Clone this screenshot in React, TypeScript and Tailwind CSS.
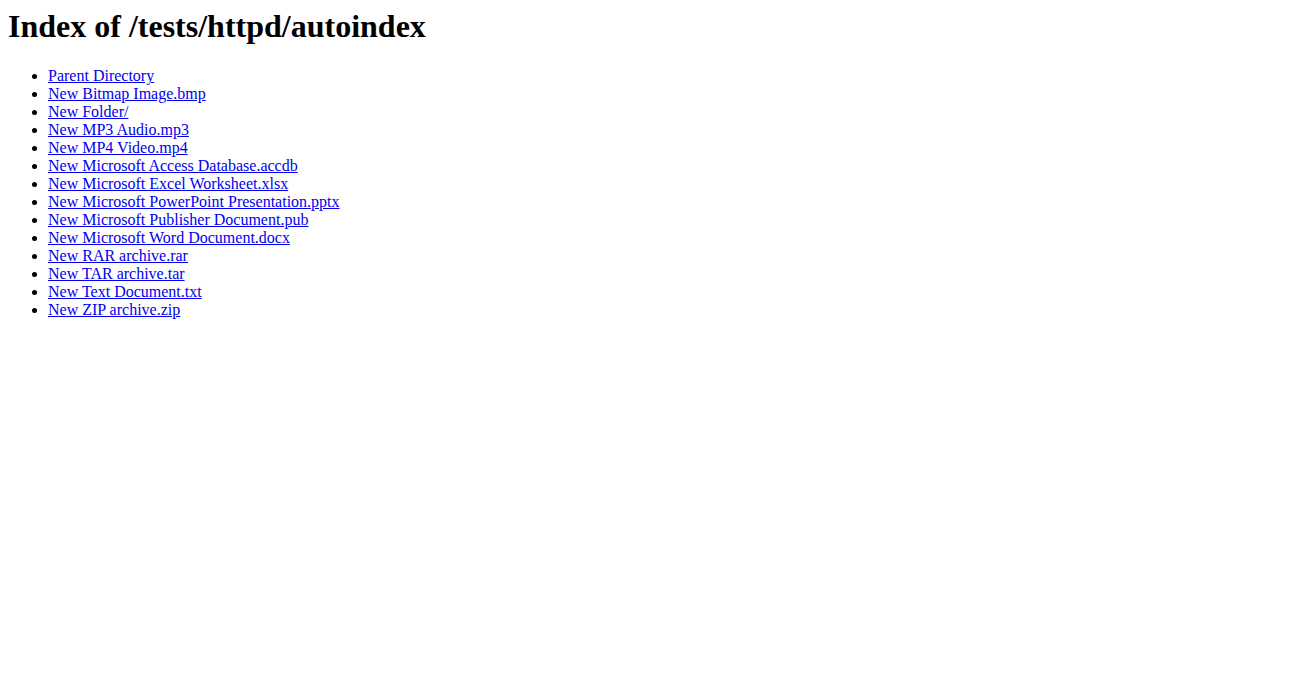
const items = [
  ["Parent Directory", "/tests/httpd/"],
  ["New Bitmap Image.bmp", "New%20Bitmap%20Image.bmp"],
  ["New Folder/", "New%20Folder/"],
  ["New MP3 Audio.mp3", "#"],
  ["New MP4 Video.mp4", "#"],
  ["New Microsoft Access Database.accdb", "#"],
  ["New Microsoft Excel Worksheet.xlsx", "#"],
  ["New Microsoft PowerPoint Presentation.pptx", "#"],
  ["New Microsoft Publisher Document.pub", "#"],
  ["New Microsoft Word Document.docx", "#"],
  ["New RAR archive.rar", "#"],
  ["New TAR archive.tar", "#"],
  ["New Text Document.txt", "#"],
  ["New ZIP archive.zip", "#"],
];

export default function App() {
  return (
    <div
      className="min-h-[676px] bg-white p-2 text-black"
      style={{ fontFamily: '"Liberation Serif", "Times New Roman", serif' }}
    >
      <h1 className="mb-[22.44px] text-[32px] font-bold leading-[normal]">
        Index of /tests/httpd/autoindex
      </h1>
      <ul className="my-4 list-disc pl-10 text-[16px] leading-[normal]">
        {items.map(([name, href]) => (
          <li key={name}>
            <a href={href} className="text-[#0000ee] underline">
              {name}
            </a>
          </li>
        ))}
      </ul>
    </div>
  );
}
